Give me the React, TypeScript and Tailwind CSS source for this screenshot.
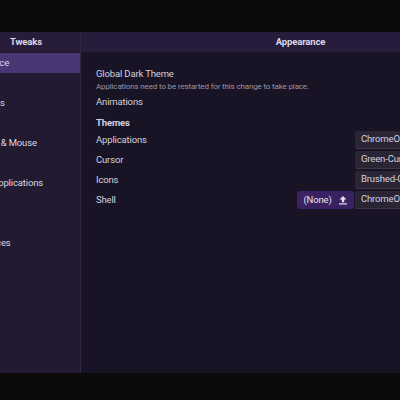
import React from "react";

const sidebarItems = [
  "Appearance",
  "Desktop",
  "Extensions",
  "Fonts",
  "Keyboard & Mouse",
  "Power",
  "Startup Applications",
  "Top Bar",
  "Windows",
  "Workspaces",
];

const themeRows = [
  { label: "Applications", value: "ChromeOS-dark" },
  { label: "Cursor", value: "Green-Cursor" },
  { label: "Icons", value: "Brushed-Grey" },
  { label: "Shell", value: "ChromeOS-dark", extra: true },
];

function UploadIcon() {
  return (
    <svg width="10" height="10" viewBox="0 0 10 10" className="shrink-0">
      <path d="M5 1 L8.5 4.6 H6.2 V7.2 H3.8 V4.6 H1.5 Z" fill="#e6e1ef" />
      <rect x="1" y="8.3" width="8" height="1.2" fill="#e6e1ef" />
    </svg>
  );
}

export default function App() {
  return (
    <div
      className="w-[400px] h-[400px] overflow-hidden bg-[#0b0b0c] pt-[32px] tracking-[-0.15px]"
      style={{ fontFamily: "Roboto, 'Noto Sans', sans-serif" }}
    >
      <div className="flex h-[341px] w-[520px]">
        {/* sidebar */}
        <div className="flex w-[81px] shrink-0 flex-col border-r border-[#2f2540] bg-[#211a30]">
          <div className="flex h-[21px] items-center border-b border-[#1c1629] bg-[#271d3b] pl-[10px] text-[9.5px] font-bold text-[#dcd7e6]">
            Tweaks
          </div>
          <ul className="flex flex-col overflow-hidden">
            {sidebarItems.map((item, i) => (
              <li
                key={item}
                className={`flex h-[20px] items-center whitespace-nowrap text-[9.5px] text-[#dcd7e6] ${
                  i === 0 ? "bg-[#4a3575]" : ""
                }`}
              >
                <span className="ml-[-40px] pt-[1px]">{item}</span>
              </li>
            ))}
          </ul>
        </div>

        {/* main */}
        <div className="flex w-[439px] shrink-0 flex-col bg-[#181425]">
          <div className="flex h-[21px] items-center justify-center border-b border-[#1c1629] bg-[#261c3b] text-[9.5px] font-bold text-[#dcd7e6]">
            Appearance
          </div>
          <div className="flex flex-col px-[15px] pt-[14px] text-[9.5px] text-[#d6d1df]">
            <div className="flex h-[14px] items-center">Global Dark Theme</div>
            <div className="flex h-[12px] items-center text-[8px] text-[#9a94a7]">
              Applications need to be restarted for this change to take place.
            </div>
            <div className="mt-[1px] flex h-[16px] items-center">Animations</div>
            <div className="mt-[6px] flex h-[15px] items-center font-bold">Themes</div>
            <div className="flex flex-col gap-[2px]">
              {themeRows.map((row) => (
                <div key={row.label} className="flex h-[18px] items-center">
                  <span className="flex-1">{row.label}</span>
                  {row.extra && (
                    <div className="mr-[1px] flex h-[18px] w-[57px] items-center justify-center gap-[6px] rounded-[3px] bg-[#3a2262] text-[9.5px] text-[#e6e1ef]">
                      <span>(None)</span>
                      <UploadIcon />
                    </div>
                  )}
                  <div className="flex h-[18px] w-[150px] items-center rounded-[3px] border-b border-[#3d3649] bg-[#2a2535] px-[6px] text-[9.5px] text-[#d6d1df]">
                    {row.value}
                  </div>
                </div>
              ))}
            </div>
          </div>
        </div>
      </div>
    </div>
  );
}
